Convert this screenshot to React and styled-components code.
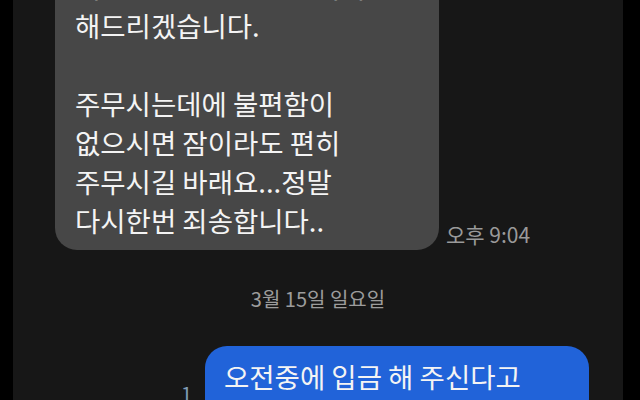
import React from "react";
import styled, { createGlobalStyle } from "styled-components";

const Global = createGlobalStyle`
  html, body { margin: 0; padding: 0; background: #000; }
  body { width: 640px; height: 400px; overflow: hidden; }
  * { box-sizing: border-box; }
`;

const Frame = styled.div`
  width: 640px;
  height: 400px;
  background: #000;
  padding: 0 17px 0 13px;
  overflow: hidden;
`;

const Screen = styled.div`
  height: 400px;
  background: #171717;
  overflow: hidden;
  font-family: "Noto Sans CJK KR", "Noto Sans", sans-serif;
`;

const Thread = styled.div`
  display: flex;
  flex-direction: column;
  margin-top: -43px;
`;

const Row = styled.div`
  display: flex;
  align-items: flex-end;
  justify-content: ${(p) => (p.$mine ? "flex-end" : "flex-start")};
  padding: ${(p) => (p.$mine ? "0 34px 0 0" : "0 0 0 42px")};
  gap: ${(p) => (p.$mine ? "13px" : "7px")};
`;

const Bubble = styled.div`
  width: 384px;
  padding: ${(p) => (p.$mine ? "11px 19px" : "10px 20px")};
  border-radius: 22px;
  background: ${(p) => (p.$mine ? "#2163d9" : "#474747")};
  color: #f4f4f4;
  font-size: 27.5px;
  line-height: 39px;
  white-space: pre-line;
  overflow: hidden;
`;

const Meta = styled.div`
  display: flex;
  flex-direction: column;
  align-items: flex-end;
  margin-bottom: ${(p) => p.$offset || 0}px;
`;

const Time = styled.span`
  font-size: 21px;
  line-height: 24px;
  color: #9a9a9a;
  white-space: nowrap;
`;

const Unread = styled.span`
  font-size: 20px;
  line-height: 24px;
  color: #7f9bb6;
`;

const DateLabel = styled.div`
  text-align: center;
  margin: 37px 0 35px;
  font-size: 20px;
  line-height: 24px;
  color: #9c9c9c;
`;

export default function App() {
  return (
    <>
      <Global />
      <Frame>
        <Screen>
          <Thread>
            <Row>
              <Bubble>
                {"내일 오전중으로 입금처리를\n해드리겠습니다.\n\n주무시는데에 불편함이\n없으시면 잠이라도 편히\n주무시길 바래요...정말\n다시한번 죄송합니다.."}
              </Bubble>
              <Meta $offset={4}>
                <Time>오후 9:04</Time>
              </Meta>
            </Row>
            <DateLabel>3월 15일 일요일</DateLabel>
            <Row $mine>
              <Meta $offset={16}>
                <Unread>1</Unread>
                <Time>오전 11:32</Time>
              </Meta>
              <Bubble $mine>
                {"오전중에 입금 해 주신다고\n하셨는데 아직 안 들어왔네요"}
              </Bubble>
            </Row>
          </Thread>
        </Screen>
      </Frame>
    </>
  );
}
